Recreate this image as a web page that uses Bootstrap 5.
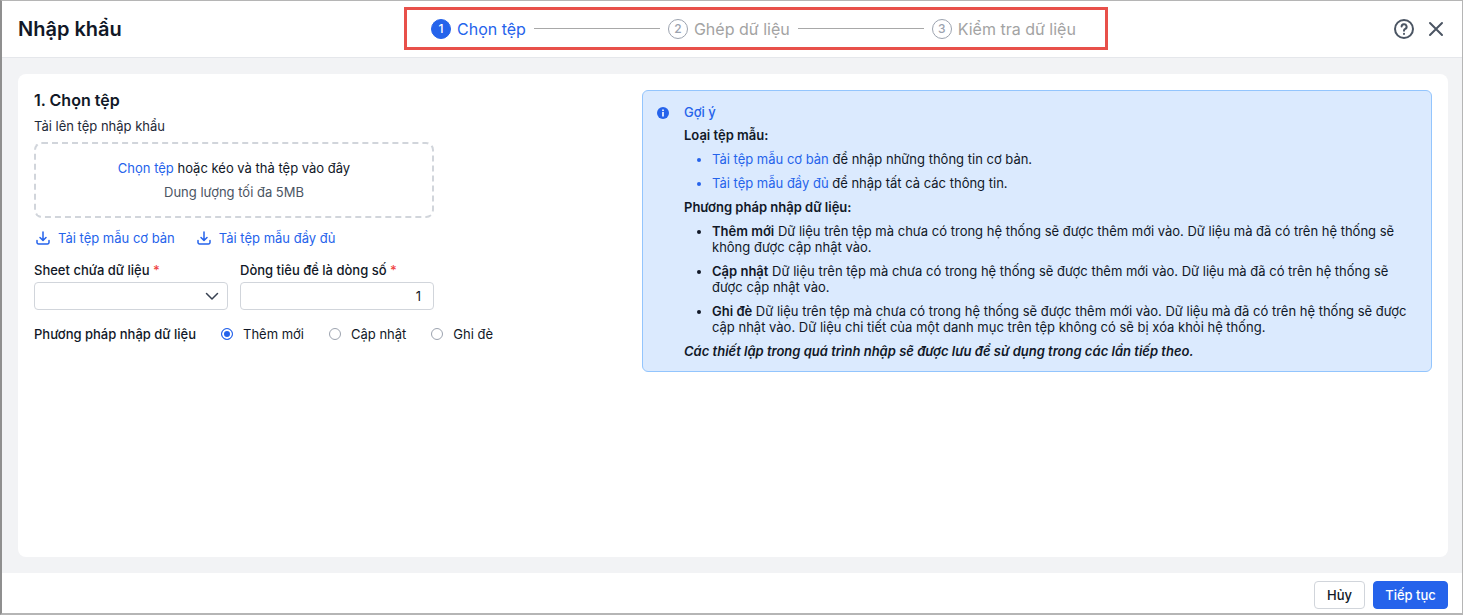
<!DOCTYPE html>
<html lang="vi">
<head>
<meta charset="utf-8">
<title>Nhập khẩu</title>
<link href="https://cdn.jsdelivr.net/npm/bootstrap@5.3.0/dist/css/bootstrap.min.css" rel="stylesheet">
<style>
html,body{height:615px;overflow:hidden}
body{font-family:Inter,"Noto Sans",sans-serif;font-size:13px;line-height:20px;color:#111827;background:#fff}
.shell{height:615px;border:1px solid #b5b5b5;border-left:2px solid #8f8f8f;border-bottom:2px solid #b5b5b5;display:flex;flex-direction:column}
.head{height:57px;flex:none;border-bottom:1px solid #e5e7eb;padding-left:16px;padding-right:14px}
.head-title{width:386px;font-size:20px;line-height:28px;font-weight:600;flex:none}
.stepper{width:704px;height:43px;border:3px solid #e8504a;padding:0 24px;margin-top:-1px;flex:none}
.step-num{width:20px;height:20px;border-radius:50%;border:1px solid #9ca3af;color:#9ca3af;font-size:12px;line-height:18px;text-align:center;flex:none;font-weight:500}
.step-num.on{background:#2563eb;border-color:#2563eb;color:#fff}
.step-txt{font-size:16px;line-height:24px;color:#a3a3a3;white-space:nowrap;margin-left:6px}
.step-txt.on{color:#2563eb}
.step-line{height:1px;background:#a8a8a8;width:126px;margin:0 8px}
.body-area{flex:1;background:#f2f3f5;padding:16px 14px 16px 16px;min-height:0}
.sheet{height:483px;background:#fff;border-radius:8px;padding:16px}
.left-col{width:608px;flex:none}
.sec-title{font-size:16px;line-height:20px;font-weight:600;margin-bottom:6px}
.sub-label{line-height:20px;color:#1f2937;margin-bottom:6px}
.drop{width:400px;height:76px;border:2px dashed #d1d5db;border-radius:8px;text-align:center;padding-top:14px;margin-bottom:10px}
.drop-sub{color:#4b5563;margin-top:4px}
.blue-link{color:#2563eb;text-decoration:none}
.dl-row{height:20px;margin-bottom:12px}
.dl-item{color:#2563eb;text-decoration:none;margin-right:20px;padding-left:1px;display:flex;align-items:center;gap:7px}
.fields{width:400px;gap:12px}
.field{width:194px}
.field-label{line-height:20px;color:#111827;margin-bottom:2px;font-weight:500}
.req{color:#ef4444}
.fake-input{height:28px;border:1px solid #d1d5db;border-radius:4px;padding:0 12px;background:#fff}
.fake-input.pick{padding-right:7px}
.radio-row{margin-top:14px}
.radio-label{width:187px;font-weight:500}
.radio-dot{width:12px;height:12px;border-radius:50%;border:1px solid #9ca3af;margin-right:10px;flex:none;background:#fff}
.radio-dot.on{border-color:#2563eb;background:#2563eb;box-shadow:inset 0 0 0 2px #fff}
.radio-item{margin-right:25px}
.hint{width:790px;height:282px;background:#dbeafe;border:1px solid #93c5fd;border-radius:6px;padding:13px 13px 0;line-height:16px;flex:none}
.hint-icon{width:14px;flex:none;margin-right:14px}
.hint-head{color:#2563eb;font-weight:500;line-height:16px;margin-bottom:7px}
.hint-b{font-weight:600;margin-bottom:8px}
.hint-list{margin:0 0 8px;padding-left:28px}
.hint-list li{margin-bottom:8px}
.hint-list li:last-child{margin-bottom:0}
.hint-list.dots-blue li::marker{color:#2563eb}
.hint-end{font-weight:600;font-style:italic}
.foot{height:40px;flex:none;padding-right:14px;padding-top:8px;gap:8px}
.btn-ghost,.btn-go{height:28px;border-radius:4px;font-size:13px;line-height:26px;padding:0;font-weight:500}
.btn-ghost{width:51px;background:#fff;border:1px solid #d1d5db;color:#111827}
.btn-go{width:75px;background:#2563eb;border:1px solid #2563eb;color:#fff}
</style>
</head>
<body>
<div class="shell">
  <div class="head d-flex align-items-center">
    <div class="head-title">Nhập khẩu</div>
    <div class="stepper d-flex align-items-center">
      <span class="step-num on">1</span><span class="step-txt on">Chọn tệp</span><span class="step-line"></span>
      <span class="step-num">2</span><span class="step-txt">Ghép dữ liệu</span><span class="step-line"></span>
      <span class="step-num">3</span><span class="step-txt">Kiểm tra dữ liệu</span>
    </div>
    <div class="ms-auto d-flex align-items-center gap-2">
      <svg width="24" height="24" viewBox="0 0 24 24" fill="none" stroke="#4b5563" stroke-width="2" stroke-linecap="round" stroke-linejoin="round"><circle cx="12" cy="12" r="9"/><path d="M9.6 9.6a2.5 2.5 0 1 1 3.6 2.3c-.8.4-1.2 1-1.2 1.8"/><path d="M12 16.8v.1"/></svg>
      <svg width="24" height="24" viewBox="0 0 24 24" fill="none" stroke="#4b5563" stroke-width="2" stroke-linecap="round"><path d="M6 6l12 12M18 6L6 18"/></svg>
    </div>
  </div>
  <div class="body-area">
    <div class="sheet d-flex">
      <div class="left-col">
        <div class="sec-title">1. Chọn tệp</div>
        <div class="sub-label">Tải lên tệp nhập khẩu</div>
        <div class="drop">
          <div><a class="blue-link" href="#">Chọn tệp</a> hoặc kéo và thả tệp vào đây</div>
          <div class="drop-sub">Dung lượng tối đa 5MB</div>
        </div>
        <div class="dl-row d-flex">
          <a class="dl-item" href="#"><svg width="16" height="16" viewBox="0 0 16 16" fill="none" stroke="#2563eb" stroke-width="1.500" stroke-linecap="round" stroke-linejoin="round"><path d="M8 2v8M5 7.500L8 10.500l3-3M2 10.500V12.500a1.500 1.500 0 0 0 1.500 1.500h9a1.500 1.500 0 0 0 1.500-1.500V10.500"/></svg>Tải tệp mẫu cơ bản</a>
          <a class="dl-item" href="#"><svg width="16" height="16" viewBox="0 0 16 16" fill="none" stroke="#2563eb" stroke-width="1.500" stroke-linecap="round" stroke-linejoin="round"><path d="M8 2v8M5 7.500L8 10.500l3-3M2 10.500V12.500a1.500 1.500 0 0 0 1.500 1.500h9a1.500 1.500 0 0 0 1.500-1.500V10.500"/></svg>Tải tệp mẫu đầy đủ</a>
        </div>
        <div class="fields d-flex">
          <div class="field">
            <div class="field-label">Sheet chứa dữ liệu <span class="req">*</span></div>
            <div class="fake-input pick d-flex align-items-center justify-content-end"><svg width="16" height="16" viewBox="0 0 16 16" fill="none" stroke="#374151" stroke-width="1.500" stroke-linecap="round" stroke-linejoin="round"><path d="M2.500 5.500L8 11l5.500-5.500"/></svg></div>
          </div>
          <div class="field">
            <div class="field-label">Dòng tiêu đề là dòng số <span class="req">*</span></div>
            <div class="fake-input d-flex align-items-center justify-content-end">1</div>
          </div>
        </div>
        <div class="radio-row d-flex align-items-center">
          <div class="radio-label flex-none">Phương pháp nhập dữ liệu</div>
          <div class="radio-item d-flex align-items-center"><span class="radio-dot on"></span>Thêm mới</div>
          <div class="radio-item d-flex align-items-center"><span class="radio-dot"></span>Cập nhật</div>
          <div class="radio-item d-flex align-items-center"><span class="radio-dot"></span>Ghi đè</div>
        </div>
      </div>
      <div class="hint d-flex">
        <div class="hint-icon"><svg width="14" height="14" viewBox="0 0 14 14"><circle cx="7" cy="7" r="6" fill="#2563eb"/><rect x="6.200" y="6" width="1.600" height="4.500" fill="#fff"/><rect x="6.200" y="3.500" width="1.600" height="1.600" fill="#fff"/></svg></div>
        <div class="flex-grow-1">
          <div class="hint-head">Gợi ý</div>
          <div class="hint-b">Loại tệp mẫu:</div>
          <ul class="hint-list dots-blue">
            <li><a class="blue-link" href="#">Tải tệp mẫu cơ bản</a> để nhập những thông tin cơ bản.</li>
            <li><a class="blue-link" href="#">Tải tệp mẫu đầy đủ</a> để nhập tất cả các thông tin.</li>
          </ul>
          <div class="hint-b">Phương pháp nhập dữ liệu:</div>
          <ul class="hint-list">
            <li><b class="fw-semibold">Thêm mới</b> Dữ liệu trên tệp mà chưa có trong hệ thống sẽ được thêm mới vào. Dữ liệu mà đã có trên hệ thống sẽ không được cập nhật vào.</li>
            <li><b class="fw-semibold">Cập nhật</b> Dữ liệu trên tệp mà chưa có trong hệ thống sẽ được thêm mới vào. Dữ liệu mà đã có trên hệ thống sẽ được cập nhật vào.</li>
            <li><b class="fw-semibold">Ghi đè</b> Dữ liệu trên tệp mà chưa có trong hệ thống sẽ được thêm mới vào. Dữ liệu mà đã có trên hệ thống sẽ được cập nhật vào. Dữ liệu chi tiết của một danh mục trên tệp không có sẽ bị xóa khỏi hệ thống.</li>
          </ul>
          <div class="hint-end">Các thiết lập trong quá trình nhập sẽ được lưu để sử dụng trong các lần tiếp theo.</div>
        </div>
      </div>
    </div>
  </div>
  <div class="foot d-flex justify-content-end">
    <button class="btn btn-ghost" type="button">Hủy</button>
    <button class="btn btn-go" type="button">Tiếp tục</button>
  </div>
</div>
</body>
</html>
